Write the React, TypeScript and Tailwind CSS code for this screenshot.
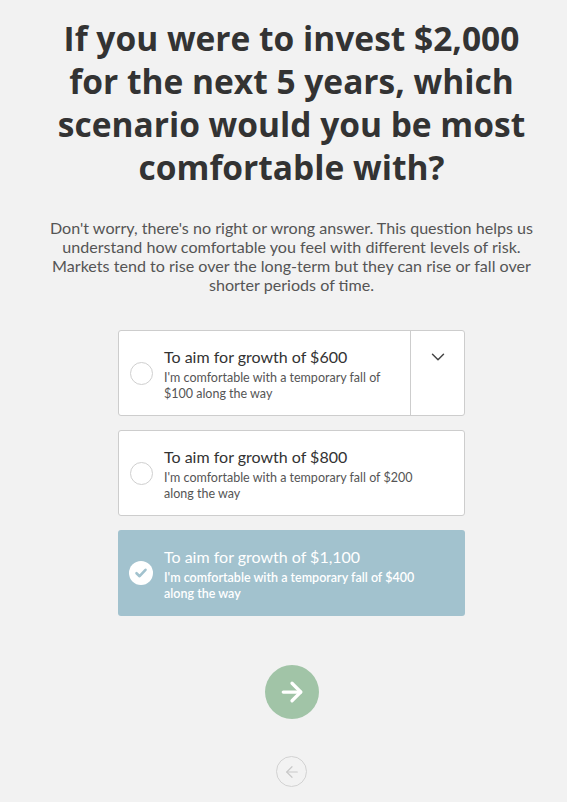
import { ChevronDown, ArrowRight, ArrowLeft } from "lucide-react";

type Option = {
  title: string;
  note: string;
  selected?: boolean;
  expandable?: boolean;
};

const options: Option[] = [
  {
    title: "To aim for growth of $600",
    note: "I'm comfortable with a temporary fall of $100 along the way",
    expandable: true,
  },
  {
    title: "To aim for growth of $800",
    note: "I'm comfortable with a temporary fall of $200 along the way",
  },
  {
    title: "To aim for growth of $1,100",
    note: "I'm comfortable with a temporary fall of $400 along the way",
    selected: true,
  },
];

function Radio({ selected }: { selected?: boolean }) {
  if (selected) {
    return (
      <div className="w-[24px] h-[24px] rounded-full bg-white flex items-center justify-center shrink-0">
        <svg width="14" height="14" viewBox="0 0 14 14" fill="none">
          <path
            d="M2.5 7.2 L5.6 10.2 L11.5 3.8"
            stroke="#a2c2ce"
            strokeWidth="2.6"
            strokeLinecap="round"
            strokeLinejoin="round"
          />
        </svg>
      </div>
    );
  }
  return <div className="w-[23px] h-[23px] rounded-full border border-[#cfcfcf] bg-white shrink-0" />;
}

function OptionCard({ opt }: { opt: Option }) {
  return (
    <div
      className={
        opt.selected
          ? "flex h-[86px] rounded-[3px] bg-[#a2c2ce] text-white"
          : "flex h-[86px] rounded-[3px] border border-[#cdcdcd] bg-white text-[#333]"
      }
    >
      <div className="flex flex-1 items-center pl-[11px] pr-3">
        <Radio selected={opt.selected} />
        <div className="ml-[11px] pt-[2px] max-w-[258px]">
          <div className="text-[16px] leading-[20px]">{opt.title}</div>
          <div
            className={
              opt.selected
                ? "mt-[3px] text-[12.5px] leading-[16px] font-semibold"
                : "mt-[3px] text-[12.5px] leading-[16px] text-[#555]"
            }
          >
            {opt.note}
          </div>
        </div>
      </div>
      {opt.expandable && (
        <div className="w-[54px] border-l border-[#cdcdcd] flex justify-center pt-[15px]">
          <ChevronDown size={22} strokeWidth={1.6} color="#444" />
        </div>
      )}
    </div>
  );
}

export default function App() {
  return (
    <div
      className="min-h-[802px] bg-[#f2f2f2] flex flex-col items-center pl-[16px]"
      style={{ fontFamily: "Lato, 'Open Sans', sans-serif" }}
    >
      <h1
        className="mt-[17px] text-center text-[33.5px] leading-[43px] font-bold text-[#333]"
        style={{ fontFamily: "'Open Sans', Lato, sans-serif" }}
      >
        If you were to invest $2,000
        <br />
        for the next 5 years, which
        <br />
        scenario would you be most
        <br />
        comfortable with?
      </h1>
      <p className="mt-[29px] text-center text-[16.1px] leading-[19px] text-[#555]">
        Don't worry, there's no right or wrong answer. This question helps us
        <br />
        understand how comfortable you feel with different levels of risk.
        <br />
        Markets tend to rise over the long-term but they can rise or fall over
        <br />
        shorter periods of time.
      </p>
      <div className="mt-[36px] w-[347px] flex flex-col gap-[14px]">
        {options.map((o) => (
          <OptionCard key={o.title} opt={o} />
        ))}
      </div>
      <button className="mt-[49px] w-[54px] h-[54px] rounded-full bg-[#a1c4a7] flex items-center justify-center">
        <ArrowRight size={30} strokeWidth={2.6} color="white" />
      </button>
      <button className="mt-[37px] w-[31px] h-[31px] rounded-full border border-[#d2d2d2] flex items-center justify-center">
        <ArrowLeft size={18} strokeWidth={1.6} color="#c8c8c8" />
      </button>
    </div>
  );
}
